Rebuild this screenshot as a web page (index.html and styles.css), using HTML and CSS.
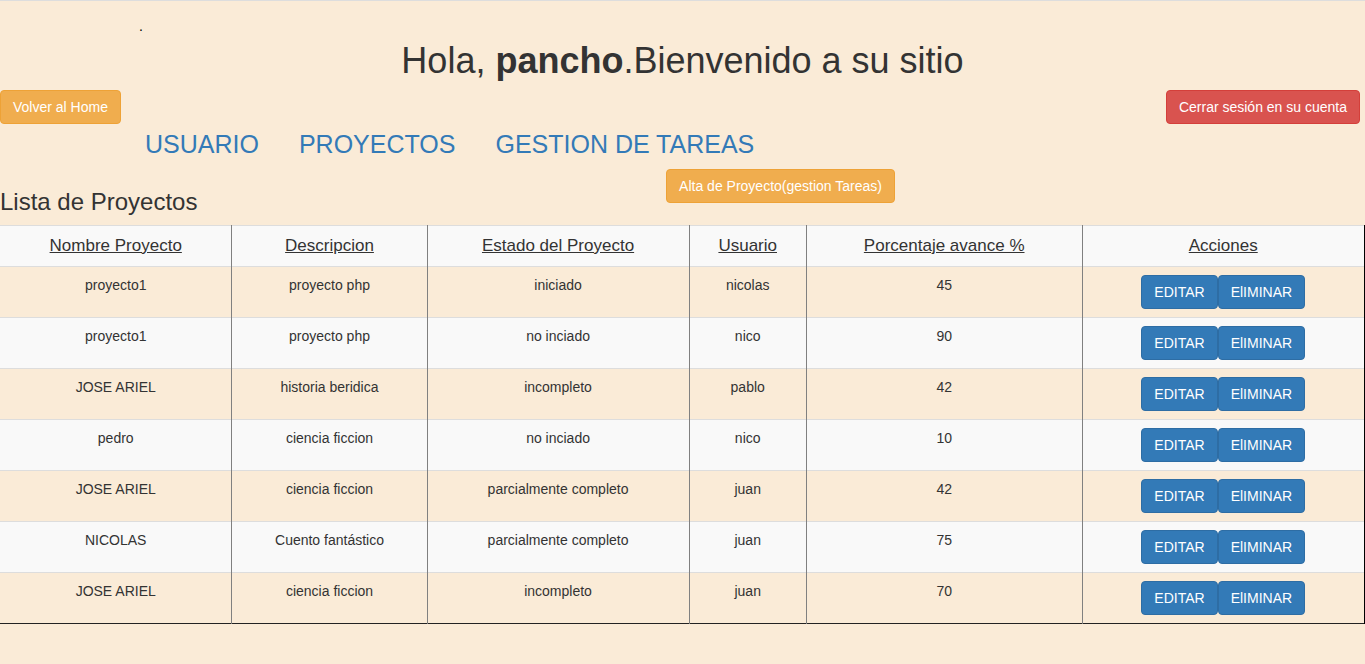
FILE: index.html
```html
<!DOCTYPE html>
<html lang="es">
<head>
<meta charset="utf-8">
<meta name="viewport" content="width=device-width, initial-scale=1">
<title>Lista de Proyectos</title>
<link rel="stylesheet" href="styles.css">
</head>
<body>
<header class="page-header">
  <div class="lead">.</div>
  <h1 class="greeting">Hola, <b>pancho</b>.Bienvenido a su sitio</h1>
  <div class="session">
    <button type="button" class="btn btn-warning">Volver al Home</button>
    <button type="button" class="btn btn-danger">Cerrar sesión en su cuenta</button>
  </div>
  <nav class="menu">
    <a href="#usuario">USUARIO</a>
    <a href="#proyectos">PROYECTOS</a>
    <a href="#tareas">GESTION DE TAREAS</a>
  </nav>
</header>
<main>
  <div class="toolbar">
    <h3 class="list-title">Lista de Proyectos</h3>
    <button type="button" class="btn btn-warning">Alta de Proyecto(gestion Tareas)</button>
  </div>
  <table class="projects">
    <thead>
      <tr>
        <th class="col-name">Nombre Proyecto</th>
        <th class="col-desc">Descripcion</th>
        <th class="col-state">Estado del Proyecto</th>
        <th class="col-user">Usuario</th>
        <th class="col-progress">Porcentaje avance %</th>
        <th class="col-actions">Acciones</th>
      </tr>
    </thead>
    <tbody>
      <tr><td>proyecto1</td><td>proyecto php</td><td>iniciado</td><td>nicolas</td><td>45</td><td><div class="actions"><button type="button" class="btn btn-primary">EDITAR</button><button type="button" class="btn btn-primary">ElIMINAR</button></div></td></tr>
      <tr><td>proyecto1</td><td>proyecto php</td><td>no inciado</td><td>nico</td><td>90</td><td><div class="actions"><button type="button" class="btn btn-primary">EDITAR</button><button type="button" class="btn btn-primary">ElIMINAR</button></div></td></tr>
      <tr><td>JOSE ARIEL</td><td>historia beridica</td><td>incompleto</td><td>pablo</td><td>42</td><td><div class="actions"><button type="button" class="btn btn-primary">EDITAR</button><button type="button" class="btn btn-primary">ElIMINAR</button></div></td></tr>
      <tr><td>pedro</td><td>ciencia ficcion</td><td>no inciado</td><td>nico</td><td>10</td><td><div class="actions"><button type="button" class="btn btn-primary">EDITAR</button><button type="button" class="btn btn-primary">ElIMINAR</button></div></td></tr>
      <tr><td>JOSE ARIEL</td><td>ciencia ficcion</td><td>parcialmente completo</td><td>juan</td><td>42</td><td><div class="actions"><button type="button" class="btn btn-primary">EDITAR</button><button type="button" class="btn btn-primary">ElIMINAR</button></div></td></tr>
      <tr><td>NICOLAS</td><td>Cuento fantástico</td><td>parcialmente completo</td><td>juan</td><td>75</td><td><div class="actions"><button type="button" class="btn btn-primary">EDITAR</button><button type="button" class="btn btn-primary">ElIMINAR</button></div></td></tr>
      <tr><td>JOSE ARIEL</td><td>ciencia ficcion</td><td>incompleto</td><td>juan</td><td>70</td><td><div class="actions"><button type="button" class="btn btn-primary">EDITAR</button><button type="button" class="btn btn-primary">ElIMINAR</button></div></td></tr>
    </tbody>
  </table>
</main>
</body>
</html>
```
FILE: styles.css
```css
* {
  box-sizing: border-box;
}

body {
  margin: 0;
  background: #faebd7;
  color: #333;
  font-family: "Liberation Sans", Arial, sans-serif;
  font-size: 14px;
  line-height: 20px;
}

.page-header {
  border-top: 1px solid #ddd;
}

.lead {
  padding: 15px 0 5px 139px;
  color: #000;
}

.greeting {
  margin: 0 0 9px;
  font-size: 36px;
  font-weight: 400;
  line-height: 40px;
  text-align: center;
}

.session {
  display: flex;
  justify-content: space-between;
  padding-right: 5px;
}

.menu {
  display: flex;
  gap: 40px;
  padding: 0 145px;
  font-size: 25px;
  line-height: 40px;
}

.menu a {
  color: #337ab7;
  text-decoration: none;
}

.btn {
  padding: 6px 12px;
  border: 1px solid transparent;
  border-radius: 4px;
  color: #fff;
  font: inherit;
  white-space: nowrap;
  cursor: pointer;
}

.btn-primary {
  background: #337ab7;
  border-color: #2e6da4;
}

.btn-warning {
  background: #f0ad4e;
  border-color: #eea236;
}

.btn-danger {
  background: #d9534f;
  border-color: #d43f3a;
}

.toolbar {
  display: flex;
  align-items: flex-start;
  padding-top: 5px;
}

.list-title {
  width: 48.8%;
  margin: 20px 0 10px;
  font-size: 24px;
  font-weight: 400;
  line-height: 26px;
}

.projects {
  width: 100%;
  border-collapse: collapse;
  border-right: 1px solid #000;
  border-bottom: 1px solid #222;
  text-align: center;
}

.projects th,
.projects td {
  padding: 8px;
  border-top: 1px solid #ddd;
  border-right: 1px solid #808080;
  vertical-align: top;
}

.projects th:last-child,
.projects td:last-child {
  border-right-color: #000;
}

.projects th {
  font-size: 17px;
  font-weight: 400;
  line-height: 24px;
  text-decoration: underline;
}

.projects thead tr,
.projects tbody tr:nth-child(even) {
  background: #f9f9f9;
}

.col-name { width: 17%; }
.col-desc { width: 14.3%; }
.col-state { width: 19.2%; }
.col-user { width: 8.6%; }
.col-progress { width: 20.2%; }
.col-actions { width: 20.7%; }

.actions {
  display: flex;
  justify-content: center;
}
```
